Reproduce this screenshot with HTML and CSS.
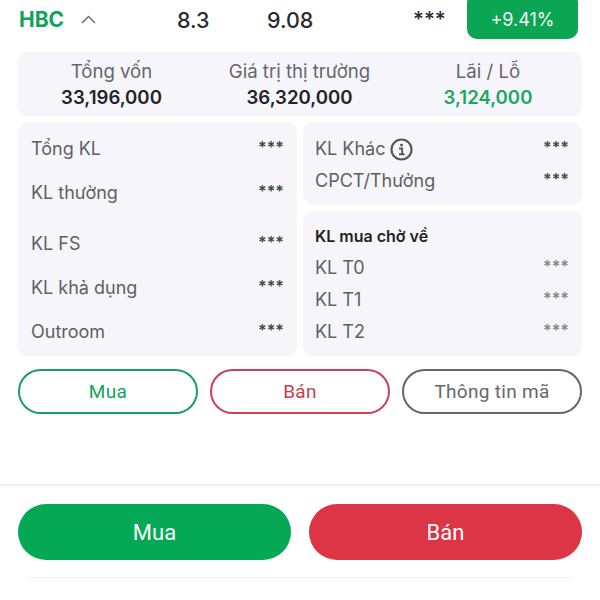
FILE: index.html
```html
<!DOCTYPE html>
<html lang="en">

<head>
    <meta charset="UTF-8">
    <meta name="viewport" content="width=device-width, initial-scale=1.0">
    <title>HBC</title>
    <link rel="stylesheet" href="styles.css">
</head>

<body>
    <div class="page">
        <div class="stock-row">
            <span class="symbol">HBC</span>
            <svg class="chevron" width="15" height="9" viewBox="0 0 15 9" fill="none">
                <path d="M1 8L7.5 1.5L14 8" stroke="#6f6f76" stroke-width="1.5" />
            </svg>
            <span class="price price-a">8.3</span>
            <span class="price price-b">9.08</span>
            <span class="masked-lg">***</span>
            <span class="badge">+9.41%</span>
        </div>

        <div class="card summary">
            <div class="summary-col summary-a">
                <span class="summary-label">Tổng vốn</span>
                <span class="summary-value">33,196,000</span>
            </div>
            <div class="summary-col summary-b">
                <span class="summary-label">Giá trị thị trường</span>
                <span class="summary-value">36,320,000</span>
            </div>
            <div class="summary-col summary-c">
                <span class="summary-label">Lãi / Lỗ</span>
                <span class="summary-value green">3,124,000</span>
            </div>
        </div>

        <div class="details">
            <div class="card left-card">
                <div class="line"><span>Tổng KL</span><b class="masked">***</b></div>
                <div class="line"><span>KL thường</span><b class="masked">***</b></div>
                <div class="line line-apart"><span>KL FS</span><b class="masked">***</b></div>
                <div class="line"><span>KL khả dụng</span><b class="masked">***</b></div>
                <div class="line"><span>Outroom</span><b class="masked">***</b></div>
            </div>
            <div class="right-col">
                <div class="card other-card">
                    <div class="line">
                        <span class="with-icon">KL Khác
                            <svg width="23" height="23" viewBox="0 0 22 22" fill="none">
                                <circle cx="11" cy="11" r="9.6" stroke="#55555c" stroke-width="2" />
                                <circle cx="11" cy="6.8" r="1.4" fill="#55555c" />
                                <path d="M8.6 10H11.6V15.2M8.6 15.6H14" stroke="#55555c" stroke-width="1.8" />
                            </svg>
                        </span>
                        <b class="masked">***</b>
                    </div>
                    <div class="line"><span>CPCT/Thưởng</span><b class="masked">***</b></div>
                </div>
                <div class="card pending-card">
                    <div class="pending-title">KL mua chờ về</div>
                    <div class="line"><span>KL T0</span><b class="masked light">***</b></div>
                    <div class="line"><span>KL T1</span><b class="masked light">***</b></div>
                    <div class="line"><span>KL T2</span><b class="masked light">***</b></div>
                </div>
            </div>
        </div>

        <div class="actions">
            <button class="outline outline-green">Mua</button>
            <button class="outline outline-red">Bán</button>
            <button class="outline outline-gray">Thông tin mã</button>
        </div>

        <div class="footer">
            <button class="solid solid-green">Mua</button>
            <button class="solid solid-red">Bán</button>
        </div>
        <div class="home-line"></div>
    </div>
</body>

</html>
```

FILE: styles.css
```css
html,
body {
    margin: 0;
    padding: 0;
    background-color: #fff;
    overflow: hidden;
}

body {
    font-family: Inter, "Noto Sans", sans-serif;
    color: #5f5f66;
}

.page {
    width: 600px;
    height: 600px;
}

.stock-row {
    display: flex;
    align-items: center;
    height: 39px;
    padding: 0 22px 0 19px;
    color: #2b2b30;
}

.symbol {
    width: 62px;
    font-size: 21px;
    font-weight: 700;
    color: #0fa45a;
}

.chevron {
    width: 15px;
}

.price {
    font-size: 21.5px;
    font-weight: 500;
}

.price-a {
    margin-left: 81px;
    width: 90px;
}

.price-b {
    width: 146px;
}

.masked-lg {
    width: 54px;
    font-size: 21px;
    font-weight: 500;
}

.badge {
    display: flex;
    align-items: center;
    justify-content: center;
    align-self: flex-end;
    flex: none;
    width: 111px;
    height: 46px;
    box-sizing: border-box;
    padding-top: 7px;
    background-color: #0ca554;
    border-radius: 10px;
    color: #f2fbf6;
    font-size: 18px;
}

.card {
    background-color: #f5f5fa;
    border-radius: 10px;
    box-sizing: border-box;
}

.summary {
    display: flex;
    height: 64px;
    margin: 13px 18px 0;
    padding-top: 8px;
}

.summary-col {
    display: flex;
    flex-direction: column;
    align-items: center;
    gap: 4px;
}

.summary-a {
    width: 187px;
}

.summary-b {
    width: 189px;
}

.summary-c {
    width: 188px;
}

.summary-label {
    font-size: 18.6px;
    line-height: 22px;
    color: #66666d;
}

.summary-value {
    font-size: 18.6px;
    line-height: 22px;
    font-weight: 600;
    color: #232328;
}

.green {
    color: #1fa565;
}

.details {
    display: grid;
    grid-template-columns: 1fr 1fr;
    gap: 6px;
    height: 234px;
    margin: 6px 18px 0;
}

.left-card {
    display: flex;
    flex-direction: column;
    gap: 18px;
    padding: 14px 13px 0;
}

.line-apart {
    margin-top: 7px;
}

.right-col {
    display: flex;
    flex-direction: column;
    gap: 6px;
}

.line {
    display: flex;
    justify-content: space-between;
    font-size: 18px;
    line-height: 26px;
}

.masked {
    font-size: 16px;
    line-height: 22px;
    font-weight: 600;
    color: #46464c;
}

.masked.light {
    color: #85858c;
}

.with-icon {
    display: flex;
    align-items: center;
    gap: 5px;
}

.other-card {
    height: 83px;
    padding: 14px 13px 0 12px;
    display: flex;
    flex-direction: column;
    gap: 6px;
}

.pending-card {
    flex: 1;
    padding: 14px 13px 0 12px;
    display: flex;
    flex-direction: column;
    gap: 6px;
}

.pending-title {
    margin-bottom: 2px;
    font-size: 16px;
    line-height: 22px;
    font-weight: 600;
    color: #1f1f24;
}

.actions {
    display: flex;
    gap: 12px;
    margin: 13px 18px 0;
}

button {
    font-family: Roboto, sans-serif;
    cursor: pointer;
    padding: 0;
}

.outline {
    flex: 1;
    height: 45px;
    background-color: #fff;
    border: 2px solid;
    border-radius: 23px;
    font-size: 19px;
    letter-spacing: 0.3px;
}

.outline-green {
    border-color: #1c9d68;
    color: #0fa45a;
}

.outline-red {
    border-color: #c94258;
    color: #cc3b4d;
}

.outline-gray {
    border-color: #66666b;
    color: #66666b;
}

.footer {
    display: flex;
    gap: 18px;
    margin-top: 70px;
    padding: 18px 18px 0;
    border-top: 2px solid #f0f0f2;
}

.solid {
    flex: 1;
    height: 56px;
    border: none;
    border-radius: 28px;
    color: #fdfdfd;
    font-size: 22px;
}

.solid-green {
    background-color: #05a854;
}

.solid-red {
    background-color: #dc3545;
}

.home-line {
    height: 1px;
    margin: 17px 28px 0;
    background-color: #f2f2f4;
}
```
